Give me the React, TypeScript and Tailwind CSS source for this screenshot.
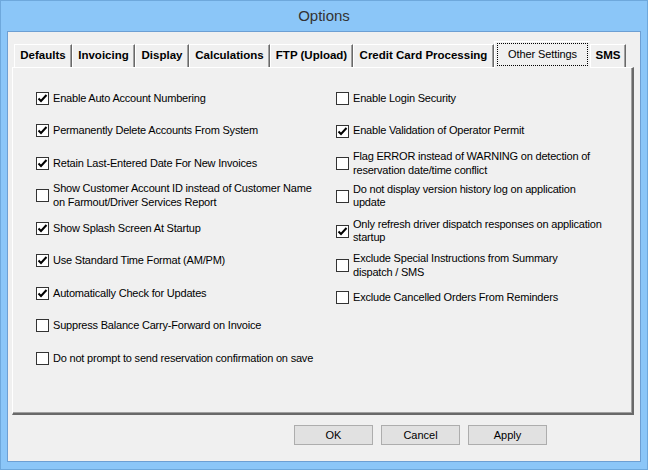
import React from 'react';

type Opt = { label: React.ReactNode; checked: boolean; h: string };

const leftOptions: Opt[] = [
  { label: 'Enable Auto Account Numbering', checked: true, h: 'h-[32.5px]' },
  { label: 'Permanently Delete Accounts From System', checked: true, h: 'h-[32.5px]' },
  { label: 'Retain Last-Entered Date For New Invoices', checked: true, h: 'h-[32.5px]' },
  {
    label: (
      <>
        Show Customer Account ID instead of Customer Name
        <br />
        on Farmout/Driver Services Report
      </>
    ),
    checked: false,
    h: 'h-[32.5px]',
  },
  { label: 'Show Splash Screen At Startup', checked: true, h: 'h-[32.5px]' },
  { label: 'Use Standard Time Format (AM/PM)', checked: true, h: 'h-[32.5px]' },
  { label: 'Automatically Check for Updates', checked: true, h: 'h-[32.5px]' },
  { label: 'Suppress Balance Carry-Forward on Invoice', checked: false, h: 'h-[32.5px]' },
  { label: 'Do not prompt to send reservation confirmation on save', checked: false, h: 'h-[32.5px]' },
];

const rightOptions: Opt[] = [
  { label: 'Enable Login Security', checked: false, h: 'h-[32.5px]' },
  { label: 'Enable Validation of Operator Permit', checked: true, h: 'h-[33px]' },
  {
    label: (
      <>
        Flag ERROR instead of WARNING on detection of
        <br />
        reservation date/time conflict
      </>
    ),
    checked: false,
    h: 'h-[32px]',
  },
  {
    label: (
      <>
        Do not display version history log on application
        <br />
        update
      </>
    ),
    checked: false,
    h: 'h-[33px]',
  },
  {
    label: (
      <>
        Only refresh driver dispatch responses on application
        <br />
        startup
      </>
    ),
    checked: true,
    h: 'h-[37px]',
  },
  {
    label: (
      <>
        Exclude Special Instructions from Summary
        <br />
        dispatch / SMS
      </>
    ),
    checked: false,
    h: 'h-[32px]',
  },
  { label: 'Exclude Cancelled Orders From Reminders', checked: false, h: 'h-[32px]' },
];

const tabs = [
  { name: 'Defaults', w: 'w-[58px]' },
  { name: 'Invoicing', w: 'w-[63px]' },
  { name: 'Display', w: 'w-[54px]' },
  { name: 'Calculations', w: 'w-[81px]' },
  { name: 'FTP (Upload)', w: 'w-[83px]' },
  { name: 'Credit Card Processing', w: 'w-[141px]' },
  { name: 'Other Settings', w: 'w-[96px]', active: true },
  { name: 'SMS', w: 'w-[36px]' },
];

const CheckBox: React.FC<{ checked: boolean }> = ({ checked }) => (
  <div className="w-[13px] h-[13px] shrink-0 border border-[#333333] bg-white flex items-center justify-center">
    {checked && (
      <svg width="11" height="11" viewBox="0 0 11 11">
        <polyline points="1.5,5.5 4,8 9.5,2" fill="none" stroke="#000" strokeWidth="2" />
      </svg>
    )}
  </div>
);

const Option: React.FC<{ opt: Opt }> = ({ opt }) => (
  <div className={`flex items-center gap-[4px] ${opt.h}`}>
    <CheckBox checked={opt.checked} />
    <span className="whitespace-nowrap leading-[13.5px]">{opt.label}</span>
  </div>
);

const App: React.FC = () => {
  return (
    <div
      className="w-[648px] h-[470px] bg-[#8bc6f8] border border-[#6ea8dc] flex flex-col text-black"
      style={{ fontFamily: '"Liberation Sans", Arial, sans-serif' }}
    >
      <div className="h-[30px] flex items-center justify-center text-[15px] text-[#333333]">Options</div>

      <div className="ml-[6px] w-[634px] h-[431px] border border-[#6d9fd3] bg-[#f0f0f0] flex flex-col">
        {/* tab strip */}
        <div className="flex items-end pl-[6px] pt-[9px] h-[35px]">
          {tabs.map((t) =>
            t.active ? (
              <div
                key={t.name}
                className={`${t.w} h-[27px] -mb-px z-10 relative bg-[#f0f0f0] border-l border-t border-white flex px-[2px] pt-[1px] pb-[2px]`}
              >
                <div className="flex-1 border border-dotted border-black flex items-center justify-center text-[11px] tracking-[-0.1px]">
                  {t.name}
                </div>
              </div>
            ) : (
              <div
                key={t.name}
                className={`${t.w} h-[23px] border-l border-t border-white border-r border-r-[#696969] shadow-[inset_-1px_0_0_#a0a0a0] flex items-center justify-center text-[11.5px] font-bold`}
              >
                {t.name}
              </div>
            )
          )}
        </div>

        {/* tab panel */}
        <div className="ml-[4px] w-[622px] h-[348px] border-l border-t border-white border-r-2 border-b-2 border-r-[#696969] border-b-[#696969] shadow-[inset_-1px_-1px_0_#a0a0a0] pl-[23px] pt-[14px] grid grid-cols-[300px_1fr] text-[11px] tracking-[-0.2px]">
          <div className="flex flex-col">
            {leftOptions.map((o, i) => (
              <Option key={i} opt={o} />
            ))}
          </div>
          <div className="flex flex-col">
            {rightOptions.map((o, i) => (
              <Option key={i} opt={o} />
            ))}
          </div>
        </div>

        {/* buttons */}
        <div className="flex gap-[8px] ml-[286px] mt-[10px] text-[11px]">
          {['OK', 'Cancel', 'Apply'].map((b) => (
            <button
              key={b}
              className="w-[79px] h-[20px] bg-[#e1e1e1] border border-[#adadad] flex items-center justify-center"
            >
              {b}
            </button>
          ))}
        </div>
      </div>
    </div>
  );
};

export default App;
